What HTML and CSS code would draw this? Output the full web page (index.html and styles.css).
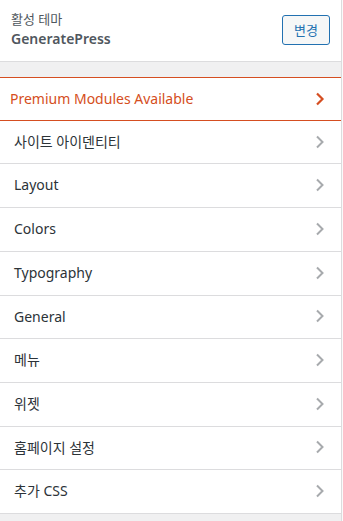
FILE: index.html
```html
<!DOCTYPE html>
<html lang="ko">
<head>
<meta charset="utf-8">
<link rel="stylesheet" href="styles.css">
</head>
<body>
<div class="panel">
  <div class="theme-info">
    <div class="theme-text">
      <div class="theme-label">활성 테마</div>
      <div class="theme-name">GeneratePress</div>
    </div>
    <button class="change-btn">변경</button>
  </div>
  <div class="spacer"></div>
  <ul class="sections">
    <li class="section premium"><span>Premium Modules Available</span><svg class="chev" viewBox="0 0 10 14" width="10" height="14"><path d="M2 1.5 L7.5 7 L2 12.5" fill="none" stroke="currentColor" stroke-width="2.2"/></svg></li>
    <li class="section"><span>사이트 아이덴티티</span><svg class="chev" viewBox="0 0 10 14" width="10" height="14"><path d="M2 1.5 L7.5 7 L2 12.5" fill="none" stroke="currentColor" stroke-width="2"/></svg></li>
    <li class="section"><span>Layout</span><svg class="chev" viewBox="0 0 10 14" width="10" height="14"><path d="M2 1.5 L7.5 7 L2 12.5" fill="none" stroke="currentColor" stroke-width="2"/></svg></li>
    <li class="section"><span>Colors</span><svg class="chev" viewBox="0 0 10 14" width="10" height="14"><path d="M2 1.5 L7.5 7 L2 12.5" fill="none" stroke="currentColor" stroke-width="2"/></svg></li>
    <li class="section"><span>Typography</span><svg class="chev" viewBox="0 0 10 14" width="10" height="14"><path d="M2 1.5 L7.5 7 L2 12.5" fill="none" stroke="currentColor" stroke-width="2"/></svg></li>
    <li class="section"><span>General</span><svg class="chev" viewBox="0 0 10 14" width="10" height="14"><path d="M2 1.5 L7.5 7 L2 12.5" fill="none" stroke="currentColor" stroke-width="2"/></svg></li>
    <li class="section"><span>메뉴</span><svg class="chev" viewBox="0 0 10 14" width="10" height="14"><path d="M2 1.5 L7.5 7 L2 12.5" fill="none" stroke="currentColor" stroke-width="2"/></svg></li>
    <li class="section"><span>위젯</span><svg class="chev" viewBox="0 0 10 14" width="10" height="14"><path d="M2 1.5 L7.5 7 L2 12.5" fill="none" stroke="currentColor" stroke-width="2"/></svg></li>
    <li class="section"><span>홈페이지 설정</span><svg class="chev" viewBox="0 0 10 14" width="10" height="14"><path d="M2 1.5 L7.5 7 L2 12.5" fill="none" stroke="currentColor" stroke-width="2"/></svg></li>
    <li class="section"><span>추가 CSS</span><svg class="chev" viewBox="0 0 10 14" width="10" height="14"><path d="M2 1.5 L7.5 7 L2 12.5" fill="none" stroke="currentColor" stroke-width="2"/></svg></li>
  </ul>
</div>
</body>
</html>
```
FILE: styles.css
```css
* { box-sizing: border-box; }
html, body {
  margin: 0;
  padding: 0;
  height: 100%;
  background: #fafafa;
}
body {
  font-family: "Noto Sans", "Noto Sans CJK KR", sans-serif;
  font-size: 13px;
  color: #3c434a;
}
.panel {
  width: 342px;
  min-height: 100%;
  background: #f0f0f1;
  border-right: 1px solid #dcdcde;
}
.theme-info {
  display: flex;
  align-items: center;
  justify-content: space-between;
  background: #fff;
  height: 62px;
  padding: 0 11px 0 11px;
  border-bottom: 1px solid #dcdcde;
}
.theme-text {
  display: flex;
  flex-direction: column;
  margin-top: -2px;
}
.theme-label {
  font-size: 13px;
  line-height: 19px;
  color: #50575e;
}
.theme-name {
  font-size: 14px;
  line-height: 20px;
  font-weight: 600;
  color: #50575e;
}
.change-btn {
  font-family: "Noto Sans", "Noto Sans CJK KR", sans-serif;
  font-size: 13px;
  color: #2271b1;
  background: #f6f7f7;
  border: 1px solid #2271b1;
  border-radius: 3px;
  width: 48px;
  height: 30px;
  padding: 0;
  margin-top: -2px;
}
.spacer {
  height: 15px;
}
.sections {
  list-style: none;
  margin: 0;
  padding: 0;
}
.section {
  display: flex;
  align-items: center;
  justify-content: space-between;
  background: #fff;
  padding: 10px 16px 11px 14px;
  font-size: 14px;
  line-height: 21.7px;
  color: #2c3338;
  border-bottom: 1px solid #dcdcde;
}
.section .chev {
  color: #a7aaad;
}
.section.premium {
  color: #d54e21;
  padding-left: 10px;
  border-top: 1px solid #d54e21;
  border-bottom: 1px solid #d54e21;
  padding-top: 10px;
  padding-bottom: 10px;
}
.section.premium .chev {
  color: #d54e21;
}
```
